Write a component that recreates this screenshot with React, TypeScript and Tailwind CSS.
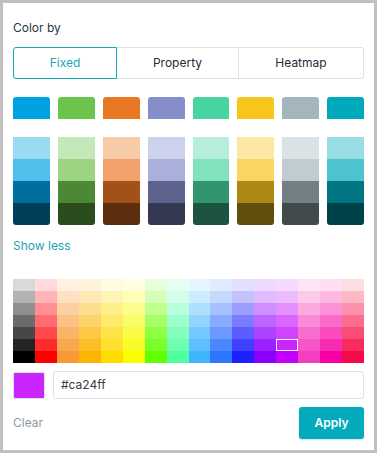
import React from 'react';

const swatches = [
  { base: '#00a2e3', shades: ['#9adbf3', '#4fc0ec', '#006f9e', '#003f59'] },
  { base: '#6dc44c', shades: ['#c5e8b8', '#9cd483', '#4c8835', '#2b4d1e'] },
  { base: '#e87722', shades: ['#f7cba8', '#f0a26a', '#a25218', '#5b2f0e'] },
  { base: '#848ec8', shades: ['#cdd2ec', '#a9b0db', '#5c638c', '#343850'] },
  { base: '#48d3a0', shades: ['#b6eedb', '#81e2bd', '#339470', '#1d5440'] },
  { base: '#f8c51c', shades: ['#fde7a5', '#f9d562', '#ad8914', '#624e0b'] },
  { base: '#a4b6bd', shades: ['#dbe2e5', '#c0ccd1', '#737f84', '#414a4c'] },
  { base: '#00a9bb', shades: ['#99dde5', '#4dc3cf', '#007683', '#004249'] },
];

// one entry per column, light to dark
const palette = [
  ['#d9d9d9', '#b3b3b3', '#8f8f8f', '#6b6b6b', '#474747', '#242424', '#000000'],
  ['#ffd9dc', '#ffb5b8', '#ff8f94', '#ff6b70', '#ff4a4d', '#ff2a2b', '#ff0000'],
  ['#fff0e1', '#fee0c2', '#fdd0a2', '#fcc185', '#fab466', '#f8a94f', '#f79a33'],
  ['#fff3dc', '#fee8b5', '#fddd8f', '#fdd36b', '#fcc846', '#fbbf28', '#fab500'],
  ['#fffbe0', '#fff3b5', '#ffef8a', '#ffea6b', '#ffe449', '#ffe12d', '#ffdc00'],
  ['#ffffe0', '#fefeb5', '#fcfd8c', '#fafd6a', '#f9fc46', '#f8fc29', '#f8ff00'],
  ['#e5ffdb', '#d5ffb8', '#bfff8c', '#a6ff66', '#8eff44', '#7bff2a', '#62ff00'],
  ['#e6fff4', '#d1ffe9', '#b8ffdb', '#9effcc', '#83ffbd', '#6bffaf', '#52ffa0'],
  ['#e6f5ff', '#ccecff', '#addfff', '#93d4ff', '#74c8ff', '#5cbfff', '#40b4ff'],
  ['#e1ebff', '#c5d9ff', '#a6c1ff', '#88aaff', '#6b99ff', '#4b88ff', '#2b78ff'],
  ['#e1e1ff', '#c2c2ff', '#9d9dff', '#7b7bff', '#5d5dff', '#4040ff', '#1f1fff'],
  ['#efdaff', '#e1bbff', '#cf8fff', '#bc66ff', '#aa44ff', '#9e22ff', '#8a00ff'],
  ['#f5daff', '#eebbff', '#e48fff', '#d966ff', '#d044ff', '#ca24ff', '#c300ff'],
  ['#ffe5f3', '#fdcaea', '#fbaae0', '#f98ad8', '#f76ecf', '#f654c8', '#f53dc0'],
  ['#ffdef0', '#ffb8e0', '#fc91d6', '#fa6ac9', '#f84cbd', '#f72cb3', '#f600a6'],
  ['#fcdde2', '#fdb8c6', '#fd91ab', '#fb6d8e', '#f94d73', '#f72b5e', '#f60a48'],
];

const selected = '#ca24ff';

const App: React.FC = () => {
  return (
    <div className="w-[377px] h-[453px] border-[3px] border-[#c0c0c0] bg-white px-[10px] pt-[15px] font-['Inter',sans-serif] text-[12px]">
      {/* Header */}
      <div className="h-[20px] leading-[20px] text-[12px] text-[#2b3640]">Color by</div>

      {/* Mode tabs */}
      <div className="mt-[9px] flex h-[32px] text-[12px]">
        <button className="w-[104px] rounded-l-[3px] border border-[#0fa8b8] text-[#1aa6b7]">Fixed</button>
        <button className="w-[122px] border-y border-r border-[#dce3e8] text-[#1e2d3b]">Property</button>
        <button className="flex-1 rounded-r-[3px] border-y border-r border-[#dce3e8] text-[#1e2d3b]">Heatmap</button>
      </div>

      {/* Preset swatches */}
      <div className="mt-[18px] grid grid-cols-8 gap-x-2">
        {swatches.map((s) => (
          <div key={s.base} className="h-[22px] rounded-t-[3px]" style={{ backgroundColor: s.base }} />
        ))}
      </div>
      <div className="mt-[18px] grid grid-cols-8 gap-x-2">
        {swatches.map((s) => (
          <div key={s.base} className="flex flex-col overflow-hidden rounded-b-[3px]">
            {s.shades.map((c) => (
              <div key={c} className="h-[22px]" style={{ backgroundColor: c }} />
            ))}
          </div>
        ))}
      </div>

      <div className="mt-[11px] h-[20px] leading-[20px] text-[12px] text-[#1ba3b5]">Show less</div>

      {/* Full palette */}
      <div className="mt-[23px] grid grid-cols-16 grid-flow-col grid-rows-7">
        {palette.map((col) =>
          col.map((c) => (
            <div
              key={c}
              className={c === selected ? 'h-[12px] border border-white' : 'h-[12px]'}
              style={{ backgroundColor: c }}
            />
          ))
        )}
      </div>

      {/* Hex input */}
      <div className="mt-[8px] flex h-[28px] items-center gap-[8px]">
        <div className="h-[27px] w-[32px] rounded-[2px] border border-[#dce3e8] bg-[#ca24ff]" />
        <div className="flex h-[28px] flex-1 items-center rounded-[3px] border border-[#dce3e8] pl-[7px] text-[12px] text-[#333c44]">
          #ca24ff
        </div>
      </div>

      {/* Footer */}
      <div className="mt-[8px] flex h-[32px] items-center justify-between">
        <button className="text-[12px] text-[#8d9aa3]">Clear</button>
        <button className="h-[32px] w-[65px] rounded-[3px] bg-[#03a9bc] text-[12px] font-semibold text-white shadow-[0_1px_2px_rgba(0,0,0,0.15)]">
          Apply
        </button>
      </div>
    </div>
  );
};

export default App;
